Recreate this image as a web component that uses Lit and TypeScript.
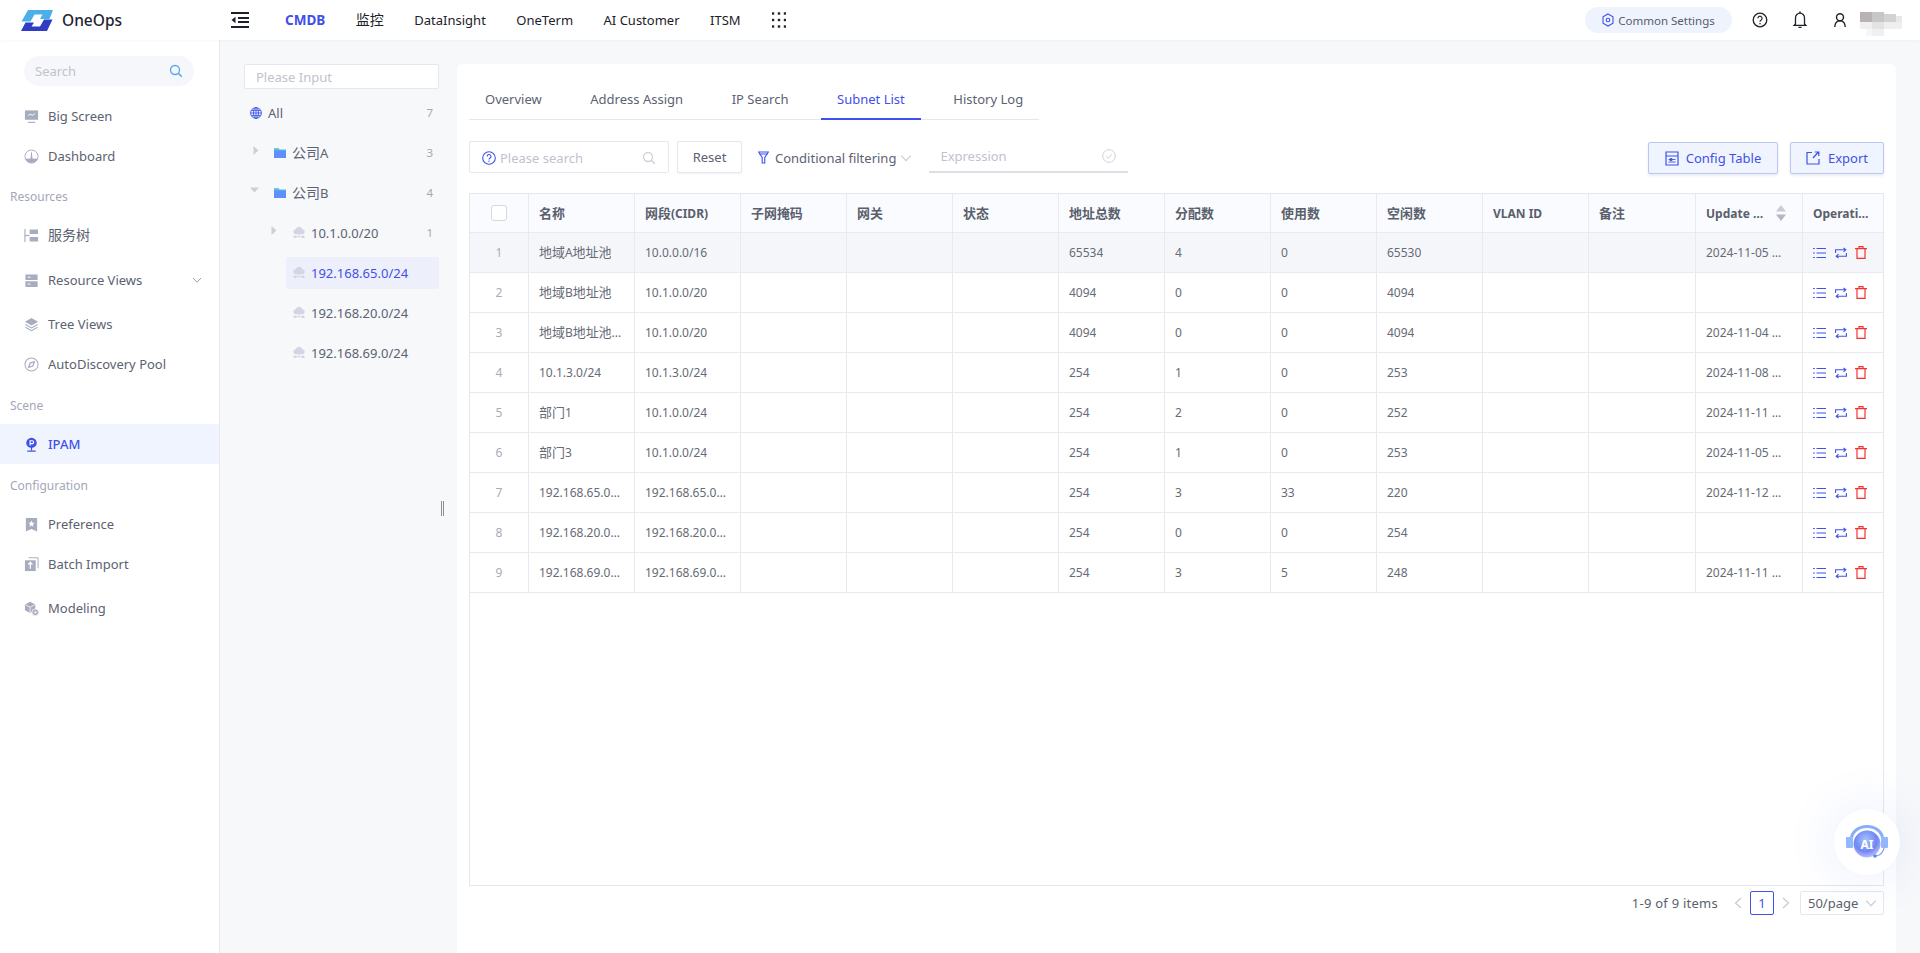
import { html, css, LitElement, svg } from "lit";
import { customElement } from "lit/decorators.js";

const FONT = `"Noto Sans", "Noto Sans CJK SC", sans-serif`;

// sidebar icons, 16 box
const sideIcons: Record<string, unknown> = {
  screen: svg`<path d="M1 1.500h14v10H1z" fill="currentColor"/><path d="M4.500 7l2-1.600 2.400 1.400 2.600-1.800" fill="none" stroke="#fff" stroke-width="1"/><path d="M4 13.600h8v1.200H4z" fill="currentColor"/>`,
  dash: svg`<circle cx="8" cy="8" r="7" fill="none" stroke="currentColor" stroke-width="1"/><path d="M1.500 10.500A7 7 0 0 0 14.500 10.500L9 10 8.400 3.500h-.8L7 10z" fill="currentColor"/>`,
  tree: svg`<path d="M1 1v14" stroke="currentColor" stroke-width="1.200"/><path d="M1 8h5" stroke="currentColor" stroke-width="1.200"/><path d="M6 1.500h9v5H6zM6 9.500h9v5H6z" fill="currentColor"/>`,
  views: svg`<path d="M1.500 1.500h13v6h-13zM1.500 8.800h13v6h-13z" fill="currentColor"/><path d="M4 4.500h3M4 11.800h3" stroke="#fff" stroke-width="1"/>`,
  layers: svg`<path d="M8 1l7 4-7 4-7-4z" fill="currentColor"/><path d="M1.500 8l6.500 3.600L14.500 8M1.500 11l6.500 3.600 6.500-3.600" fill="none" stroke="currentColor" stroke-width="1.100"/>`,
  compass: svg`<circle cx="8" cy="8" r="7" fill="none" stroke="currentColor" stroke-width="1.100"/><path d="M11 5L9.500 9.500 5 11l1.500-4.500z" fill="none" stroke="currentColor" stroke-width="1.300"/>`,
  ipam: svg`<path d="M8 .8a5.600 5.600 0 0 1 5.600 5.600c0 3.100-2.600 5.200-5.600 5.200S2.400 9.500 2.400 6.400A5.600 5.600 0 0 1 8 .8z" fill="currentColor"/><path d="M6.500 9V4h2.200a1.500 1.500 0 0 1 0 3.100H6.500" fill="none" stroke="#fff" stroke-width="1.200"/><path d="M8 11.500v2.500M3.500 15h9" stroke="currentColor" stroke-width="1.300"/>`,
  pref: svg`<path d="M2 1h12v14.500l-6-2.800-6 2.800z" fill="currentColor"/><path d="M8 3.800l1 2.200 2.300.2-1.700 1.600.5 2.300L8 9l-2.100 1.100.5-2.300-1.700-1.600L7 6z" fill="#fff"/>`,
  batch: svg`<path d="M5 .8h10v11" fill="none" stroke="currentColor" stroke-width="1"/><path d="M1 3.500h11.500V15H1z" fill="currentColor"/><path d="M6.800 6v6.500M4.500 8l2.300-2.200L9 8" fill="none" stroke="#fff" stroke-width="1.300"/>`,
  model: svg`<path d="M6.500 .8l5.500 3v6l-5.500 3-5.500-3v-6z" fill="currentColor"/><path d="M1.500 4l5 2.700 5-2.700M6.500 6.700v6" fill="none" stroke="#fff" stroke-width=".8"/><circle cx="12" cy="12" r="3.600" fill="currentColor" stroke="#fff" stroke-width=".8"/><path d="M10.300 12h3.400M12 10.300v3.400" stroke="#fff" stroke-width=".8"/>`,
};

type NavEntry =
  | { label: string; mt?: string }
  | { text: string; icon: string; mt?: string; active?: boolean; caret?: boolean };

const NAV: NavEntry[] = [
  { text: "Big Screen", icon: "screen", mt: "mt10" },
  { text: "Dashboard", icon: "dash" },
  { label: "Resources" },
  { text: "服务树", icon: "tree" },
  { text: "Resource Views", icon: "views", mt: "mt5", caret: true },
  { text: "Tree Views", icon: "layers", mt: "mt4" },
  { text: "AutoDiscovery Pool", icon: "compass" },
  { label: "Scene", mt: "mt1" },
  { text: "IPAM", icon: "ipam", active: true },
  { label: "Configuration", mt: "mt1" },
  { text: "Preference", icon: "pref" },
  { text: "Batch Import", icon: "batch" },
  { text: "Modeling", icon: "model", mt: "mt4" },
];

const TREE = [
  { level: 0, kind: "globe", text: "All", count: "7" },
  { level: 1, kind: "folder", text: "公司A", count: "3", arrow: "right" },
  { level: 1, kind: "folder", text: "公司B", count: "4", arrow: "down" },
  { level: 2, kind: "cloud", text: "10.1.0.0/20", count: "1", arrow: "right" },
  { level: 2, kind: "cloud", text: "192.168.65.0/24", selected: true },
  { level: 2, kind: "cloud", text: "192.168.20.0/24" },
  { level: 2, kind: "cloud", text: "192.168.69.0/24" },
];

const HEAD = ["名称", "网段(CIDR)", "子网掩码", "网关", "状态", "地址总数", "分配数", "使用数", "空闲数", "VLAN ID", "备注"];

const ROWS = [
  ["地域A地址池", "10.0.0.0/16", "65534", "4", "0", "65530", "2024-11-05 10:12:33"],
  ["地域B地址池", "10.1.0.0/20", "4094", "0", "0", "4094", ""],
  ["地域B地址池...", "10.1.0.0/20", "4094", "0", "0", "4094", "2024-11-04 16:40:02"],
  ["10.1.3.0/24", "10.1.3.0/24", "254", "1", "0", "253", "2024-11-08 09:25:47"],
  ["部门1", "10.1.0.0/24", "254", "2", "0", "252", "2024-11-11 14:03:18"],
  ["部门3", "10.1.0.0/24", "254", "1", "0", "253", "2024-11-05 11:37:52"],
  ["192.168.65.0/24", "192.168.65.0/24", "254", "3", "33", "220", "2024-11-12 08:51:26"],
  ["192.168.20.0/24", "192.168.20.0/24", "254", "0", "0", "254", ""],
  ["192.168.69.0/24", "192.168.69.0/24", "254", "3", "5", "248", "2024-11-11 17:19:40"],
];

// the reference's Chinese runs are a touch bigger than its latin text
const zh = (s: string) =>
  s.split(/([\u4e00-\u9fff]+)/).map((p, i) => (i % 2 ? html`<span class="zh">${p}</span>` : p));

@customElement("app-root")
export class AppRoot extends LitElement {
  static styles = css`
    :host {
      display: block;
      width: 100%;
      height: 100vh;
      overflow: hidden;
      position: relative;
      background: #f7f8fa;
      font-family: ${css([FONT] as unknown as TemplateStringsArray)};
      font-size: 13px;
      color: #5b6272;
    }
    svg { display: block; flex: none; }
    .zh { font-size: 1.08em; line-height: 1; }

    .top {
      height: 40px;
      background: #fff;
      display: flex;
      align-items: center;
      box-shadow: 0 1px 3px rgba(60, 70, 110, 0.05);
      position: relative;
    }
    .logo { margin-left: 21px; }
    .brand { margin-left: 9px; width: 169px; font-size: 15.5px; font-weight: 500; color: #1f2433; }
    .fold { margin-right: 36px; }
    .menu { display: flex; align-items: center; gap: 30.5px; color: #1d2129; }
    .menu .on { color: #3f51e8; font-weight: 700; font-size: 13.5px; }
    .apps { margin-left: 1px; }
    .top-right { margin-left: auto; display: flex; align-items: center; height: 100%; }
    .settings {
      width: 147px;
      height: 26px;
      box-sizing: border-box;
      border-radius: 13px;
      background: #eef3fd;
      display: flex;
      align-items: center;
      justify-content: center;
      gap: 4px;
      font-size: 11.5px;
      color: #555c6e;
      margin-right: 20px;
    }
    .tool { width: 16px; margin-right: 24px; color: #1d2129; }
    .tool.last { margin-right: 10px; }
    .mosaic { margin-right: 18px; margin-top: 8px; }

    .body { display: flex; height: 913px; }

    .side {
      width: 220px;
      flex: none;
      box-sizing: border-box;
      background: #fff;
      border-right: 1px solid #e8eaef;
      padding-top: 16px;
    }
    .side-search {
      margin-left: 24px;
      width: 170px;
      height: 30px;
      box-sizing: border-box;
      padding: 0 11px;
      border-radius: 15px;
      background: #f6f7fa;
      display: flex;
      align-items: center;
      justify-content: space-between;
      color: #bfc3cd;
    }
    .item {
      height: 40px;
      display: flex;
      align-items: center;
      padding-left: 24px;
      gap: 9px;
    }
    .item .ico { color: #a8acbf; width: 15px; height: 15px; }
    .item.active { background: #f0f4fe; color: #3f51e8; font-weight: 500; }
    .item.active .ico { color: #3f51e8; }
    .caret { margin-left: auto; margin-right: 17px; color: #8d93a3; }
    .label {
      height: 40px;
      margin-bottom: -1px;
      display: flex;
      align-items: center;
      padding-left: 10px;
      font-size: 12px;
      color: #a3a7b8;
    }
    .mt1 { margin-top: 1px; }
    .mt4 { margin-top: 4px; }
    .mt5 { margin-top: 5px; }
    .mt10 { margin-top: 10px; }

    .tree-panel {
      width: 237px;
      flex: none;
      box-sizing: border-box;
      padding: 24px 18px 0 24px;
      position: relative;
    }
    .tree-input {
      height: 25px;
      box-sizing: border-box;
      border: 1px solid #e4e7ed;
      border-radius: 2px;
      background: #fff;
      display: flex;
      align-items: center;
      padding-left: 11px;
      margin-bottom: 8px;
      color: #bfc3cd;
    }
    .node-row { display: flex; height: 32px; margin-bottom: 8px; }
    .sw {
      flex: none;
      display: flex;
      justify-content: flex-end;
      align-items: center;
      padding: 0 9px 6px 0;
      box-sizing: border-box;
    }
    .sw.l0 { width: 0; padding: 0; }
    .sw.l1 { width: 24px; }
    .sw.l2 { width: 42px; }
    .node {
      flex: 1;
      min-width: 0;
      box-sizing: border-box;
      display: flex;
      align-items: center;
      gap: 6px;
      padding: 0 6px 1px;
      border-radius: 2px;
    }
    .node.l2 { padding-left: 7px; }
    .node.sel { background: #edf0fb; color: #3f51e8; }
    .count { margin-left: auto; font-size: 11.5px; color: #a3a7b8; }
    .grip {
      position: absolute;
      left: 221px;
      top: 461px;
      width: 1px;
      height: 15px;
      border-left: 1px solid #8b8f9a;
      border-right: 1px solid #8b8f9a;
    }

    .card {
      width: 1439px;
      flex: none;
      box-sizing: border-box;
      margin-top: 24px;
      padding: 15px 12px 0;
      background: #fff;
      border-radius: 6px 6px 0 0;
      display: flex;
      flex-direction: column;
    }
    .tabs {
      width: 570px;
      height: 41px;
      box-sizing: border-box;
      border-bottom: 1px solid #e4e7ed;
      display: flex;
      gap: 16.6px;
      white-space: nowrap;
    }
    .tab {
      flex: none;
      padding: 0 16px 2px;
      height: 41px;
      box-sizing: border-box;
      display: flex;
      align-items: center;
    }
    .tab.on { color: #3f51e8; border-bottom: 2px solid #3f51e8; padding-bottom: 0; }

    .bar { display: flex; height: 33px; margin-top: 21px; align-items: flex-start; }
    .search {
      width: 200px;
      height: 32px;
      box-sizing: border-box;
      border: 1px solid #e4e7ed;
      border-radius: 2px;
      display: flex;
      align-items: center;
      padding: 1px 12px 0;
      gap: 4px;
      color: #bfc3cd;
    }
    .search .mag { margin-left: auto; }
    .reset {
      margin-left: 8px;
      width: 65px;
      height: 32px;
      box-sizing: border-box;
      border: 1px solid #e4e7ed;
      border-radius: 2px;
      display: flex;
      align-items: center;
      justify-content: center;
      box-shadow: 0 1px 2px rgba(60, 70, 110, 0.06);
    }
    .filter { margin-left: 16px; height: 32px; padding-top: 1px; box-sizing: border-box; display: flex; align-items: center; gap: 6px; }
    .filter svg:last-child { margin-left: -2px; }
    .expr {
      margin-left: 17px;
      width: 199px;
      height: 32px;
      box-sizing: border-box;
      border-bottom: 2px solid #dcdee3;
      display: flex;
      align-items: center;
      justify-content: space-between;
      padding: 0 12px 0 11px;
      color: #bfc3cd;
    }
    .btn {
      height: 32px;
      margin-top: 1px;
      box-sizing: border-box;
      border: 1px solid #b9c6f6;
      border-radius: 2px;
      background: #f0f4fe;
      color: #3f51e8;
      display: flex;
      align-items: center;
      justify-content: center;
      gap: 7px;
      box-shadow: 0 2px 3px rgba(60, 70, 110, 0.1);
    }
    .btn.config { width: 130px; margin-left: auto; }
    .btn.export { width: 94px; margin-left: 12px; gap: 8px; }

    .table {
      margin-top: 19px;
      height: 693px;
      box-sizing: border-box;
      border: 1px solid #e4e7ed;
      font-size: 12px;
      color: #666b76;
    }
    .tr {
      display: grid;
      grid-template-columns: 59px 106px repeat(9, 106px) 107px 107px 1fr;
      height: 40px;
      box-sizing: border-box;
      border-bottom: 1px solid #e8eaef;
    }
    .tr.head { height: 39px; background: #f9fbff; font-weight: 700; color: #5a5f6b; }
    .tr.hover { background: #f5f6fa; }
    .td {
      min-width: 0;
      border-right: 1px solid #e8eaef;
      box-sizing: border-box;
      padding: 0 14px 0 10px;
      display: flex;
      align-items: center;
    }
    .td:last-child { border-right: 0; padding-right: 10px; }
    .td > span { overflow: hidden; white-space: nowrap; text-overflow: ellipsis; min-width: 0; }
    .td > span.full { overflow: visible; text-overflow: clip; }
    .td.idx { justify-content: center; padding: 0; color: #a8acb6; }
    .box {
      width: 16px;
      height: 16px;
      box-sizing: border-box;
      border: 1px solid #d5d8e0;
      border-radius: 3px;
      background: #fff;
    }
    .td > span.short { max-width: 60px; }
    .sort { margin-left: auto; margin-right: 2px; }
    .ops { display: flex; gap: 8.5px; align-items: center; }

    .pager {
      margin-top: 5px;
      height: 24px;
      display: flex;
      align-items: center;
      justify-content: flex-end;
      color: #5a5f6b;
    }
    .pg-count { margin-right: 16px; letter-spacing: 0.25px; }
    .pg-num {
      width: 24px;
      height: 24px;
      margin: 0 8px;
      box-sizing: border-box;
      border: 1px solid #3f51e8;
      border-radius: 2px;
      color: #3f51e8;
      display: flex;
      align-items: center;
      justify-content: center;
    }
    .pg-size {
      margin-left: 10px;
      width: 84px;
      height: 24px;
      box-sizing: border-box;
      border: 1px solid #e4e7ed;
      border-radius: 2px;
      display: flex;
      align-items: center;
      justify-content: space-between;
      padding: 0 6px 0 7px;
    }

    .ai {
      position: absolute;
      left: 1834px;
      top: 809px;
      width: 66px;
      height: 66px;
      border-radius: 50%;
      background: #fff;
      box-shadow: 0 0 40px 12px rgba(90, 110, 240, 0.07);
      display: flex;
      align-items: center;
      justify-content: center;
    }
    .ai text { font-family: ${css([FONT] as unknown as TemplateStringsArray)}; font-weight: 700; font-size: 12px; }
  `;

  private chevron(size = 12, color = "#c9ccd4") {
    return html`<svg width=${size} height=${size} viewBox="0 0 10 10"><path d="M1 3l4 4.200L9 3" fill="none" stroke=${color} stroke-width=".9"/></svg>`;
  }

  private magnifier(color: string) {
    return html`<svg class="mag" width="14" height="14" viewBox="0 0 14 14"><circle cx="6" cy="6" r="4.500" fill="none" stroke=${color} stroke-width="1.300"/><path d="M9.400 9.400l3.400 3.400" stroke=${color} stroke-width="1.500"/></svg>`;
  }

  private renderTop() {
    return html`
      <header class="top">
        <svg class="logo" width="32" height="21" viewBox="0 0 32 21">
          <path d="M7 0H32L28.500 9H19L21.500 4.500H13.500L9.500 11.500H0.500Z" fill="#4bb0e8"/>
          <path d="M31.500 9.500L26 21H0L4.500 12.500H13L10.500 16.500H19L23 9.500Z" fill="#2f3cc4"/>
        </svg>
        <div class="brand">OneOps</div>
        <svg class="fold" width="18" height="16" viewBox="0 0 18 16">
          <path d="M0 1h18M7 6h11M7 10h11M0 15h18" stroke="#1d2129" stroke-width="1.800"/>
          <path d="M4.500 4.800v6.400L.5 8z" fill="#1d2129"/>
        </svg>
        <nav class="menu">
          <span class="on">CMDB</span><span>${zh("监控")}</span><span>DataInsight</span><span>OneTerm</span><span>AI Customer</span><span>ITSM</span>
          <svg class="apps" width="14" height="16" viewBox="0 0 14 16" fill="#1d2129">
            ${[1, 7, 13].flatMap((x) => [1.5, 8, 14.5].map((y) => svg`<rect x=${x - 1.2} y=${y - 1.2} width="2.400" height="2.400"/>`))}
          </svg>
        </nav>
        <div class="top-right">
          <div class="settings">
            <svg width="12" height="14" viewBox="0 0 12 14"><path d="M6 1l5 2.800v6.400L6 13l-5-2.800V3.800z" fill="none" stroke="#3f51e8" stroke-width="1.100"/><circle cx="6" cy="7" r="1.800" fill="none" stroke="#3f51e8" stroke-width="1.100"/></svg>
            Common Settings
          </div>
          <svg class="tool" width="16" height="16" viewBox="0 0 16 16">
            <circle cx="8" cy="8" r="6.800" fill="none" stroke="currentColor" stroke-width="1.300"/>
            <path d="M5.900 6.300a2.100 2.100 0 1 1 3.300 1.700c-.8.500-1.200.9-1.200 1.800" fill="none" stroke="currentColor" stroke-width="1.200"/>
            <circle cx="8" cy="11.700" r=".8" fill="currentColor"/>
          </svg>
          <svg class="tool" width="16" height="18" viewBox="0 0 16 18">
            <path d="M8 2.200a4.500 4.500 0 0 1 4.500 4.500v6.300l1.300 1.300H2.200l1.300-1.300V6.700A4.500 4.500 0 0 1 8 2.200z" fill="none" stroke="currentColor" stroke-width="1.300"/>
            <path d="M8 .6v1.600M6.500 16.400h3" stroke="currentColor" stroke-width="1.400"/>
          </svg>
          <svg class="tool last" width="16" height="16" viewBox="0 0 16 16">
            <circle cx="8" cy="5.200" r="3.500" fill="none" stroke="currentColor" stroke-width="1.400"/>
            <path d="M2.800 15c0-3.500 2-6.300 5.200-6.300s5.200 2.800 5.200 6.300" fill="none" stroke="currentColor" stroke-width="1.400"/>
          </svg>
          <svg class="mosaic" width="44" height="24" viewBox="0 0 44 24">
            <rect x="2" y="0" width="12" height="10" fill="#b8b1b6"/>
            <rect x="14" y="0" width="12" height="10" fill="#c9c6c9"/>
            <rect x="26" y="2" width="12" height="8" fill="#d2d2d4"/>
            <rect x="38" y="4" width="6" height="6" fill="#e8e8e8"/>
            <rect x="2" y="10" width="12" height="7" fill="#f1eff0"/>
            <rect x="14" y="10" width="12" height="7" fill="#e4e3e4"/>
            <rect x="26" y="10" width="18" height="7" fill="#efefef"/>
            <rect x="8" y="17" width="12" height="7" fill="#f7f6f7"/>
            <rect x="14" y="17" width="12" height="7" fill="#f0f0f0"/>
          </svg>
        </div>
      </header>
    `;
  }

  private renderSide() {
    return html`
      <aside class="side">
        <div class="side-search">Search ${this.magnifier("#5aa6f5")}</div>
        ${NAV.map((n) =>
          "label" in n
            ? html`<div class="label ${n.mt ?? ""}">${n.label}</div>`
            : html`<div class="item ${n.mt ?? ""} ${n.active ? "active" : ""}">
                <svg class="ico" viewBox="0 0 16 16">${sideIcons[n.icon]}</svg>
                <span>${zh(n.text)}</span>
                ${n.caret ? html`<span class="caret">${this.chevron(10, "#8d93a3")}</span>` : ""}
              </div>`
        )}
      </aside>
    `;
  }

  private nodeIcon(kind: string) {
    if (kind === "globe")
      return html`<svg width="12" height="12" viewBox="0 0 12 12" fill="none" stroke="#3f51e8" stroke-width=".9"><circle cx="6" cy="6" r="5.400"/><ellipse cx="6" cy="6" rx="2.500" ry="5.400"/><path d="M6 .6v10.800M.6 6h10.800M1.300 3.400h9.400M1.300 8.600h9.400"/></svg>`;
    if (kind === "folder")
      return html`<svg width="12" height="12" viewBox="0 0 12 12"><path d="M0 1.500h4.500l1 1.200H12V11H0z" fill="#5f8ffa"/><path d="M0 1.500h4.500l1 1.200H12v.8H0z" fill="#48c7d8"/></svg>`;
    return html`<svg width="12" height="13" viewBox="0 0 12 13" fill="#d3d6e2"><path d="M3 8.300a2.500 2.500 0 0 1-.3-5A3.400 3.400 0 0 1 9.300 3.300a2.500 2.500 0 0 1-.3 5z"/><path d="M5.500 8.300h1v2h-1z"/><path d="M0 10.300h12v.9H0z"/><rect x="1" y="9.600" width="2.400" height="2.400"/><rect x="8.600" y="9.600" width="2.400" height="2.400"/></svg>`;
  }

  private renderTree() {
    return html`
      <section class="tree-panel">
        <div class="tree-input">Please Input</div>
        ${TREE.map(
          (t) => html`<div class="node-row">
            <div class="sw l${t.level}">
              ${t.arrow === "right"
                ? html`<svg width="6" height="9" viewBox="0 0 6 9"><path d="M0.500 0l5 4.500-5 4.500z" fill="#cdd0da"/></svg>`
                : t.arrow === "down"
                ? html`<svg width="9" height="6" viewBox="0 0 9 6"><path d="M0 .5h9L4.500 5.500z" fill="#cdd0da"/></svg>`
                : ""}
            </div>
            <div class="node l${t.level} ${t.selected ? "sel" : ""}">
              ${this.nodeIcon(t.kind)}
              <span>${zh(t.text)}</span>
              ${t.count ? html`<span class="count">${t.count}</span>` : ""}
            </div>
          </div>`
        )}
        <div class="grip"></div>
      </section>
    `;
  }

  private renderBar() {
    return html`
      <div class="bar">
        <div class="search">
          <svg width="14" height="14" viewBox="0 0 14 14"><circle cx="7" cy="7" r="6.300" fill="none" stroke="#3f51e8" stroke-width="1.100"/><path d="M5.200 5.500a1.900 1.900 0 1 1 2.900 1.500c-.7.500-1.100.8-1.100 1.600" fill="none" stroke="#3f51e8" stroke-width="1.100"/><circle cx="7" cy="10.300" r=".7" fill="#3f51e8"/></svg>
          Please search ${this.magnifier("#cfd2da")}
        </div>
        <div class="reset">Reset</div>
        <div class="filter">
          <svg width="11" height="13" viewBox="0 0 11 13"><path d="M.6 1h9.800L6.800 6.500V12H4.200V6.500z" fill="none" stroke="#3f51e8" stroke-width="1.100"/><path d="M1.500 3h8" stroke="#3f51e8" stroke-width="1"/></svg>
          Conditional filtering ${this.chevron()}
        </div>
        <div class="expr">
          Expression
          <svg width="14" height="14" viewBox="0 0 14 14" fill="none" stroke="#cfd2da" stroke-width="1"><circle cx="7" cy="7" r="6.300"/><path d="M4.200 7.200l2.100 2.100 3.600-4"/></svg>
        </div>
        <div class="btn config">
          <svg width="14" height="15" viewBox="0 0 14 15" fill="none" stroke="#3f51e8" stroke-width="1.200"><path d="M1 1h12v13H1zM1 5h12"/><path d="M3.500 8.500h7M3.500 11h7" stroke-width=".9"/><circle cx="6" cy="8.500" r="1" fill="#3f51e8"/></svg>
          Config Table
        </div>
        <div class="btn export">
          <svg width="14" height="14" viewBox="0 0 14 14" fill="none" stroke="#3f51e8" stroke-width="1.200"><path d="M6 1.500H1v11.500h12V8"/><path d="M7 7l5.500-6M8.800 1h4v4"/></svg>
          Export
        </div>
      </div>
    `;
  }

  private renderOps() {
    return html`<div class="ops">
      <svg width="13" height="12" viewBox="0 0 13 12" stroke="#3f51e8" stroke-width="1.100"><path d="M3.500 1.500H13M3.500 6H13M3.500 10.500H13M0 1.500h1.800M0 6h1.800M0 10.500h1.800"/></svg>
      <svg width="12" height="12" viewBox="0 0 12 12" fill="none" stroke="#3f51e8" stroke-width="1.100"><path d="M.6 6V2.800h10M8.500.8l2.300 2-2.300 2M11.400 6v3.200H1.400M3.500 7.200l-2.300 2 2.300 2"/></svg>
      <svg width="12" height="13" viewBox="0 0 12 13" fill="none" stroke="#f5322d" stroke-width="1.200"><path d="M0 2.600h12M2 2.600v9.800h8V2.600M4 2.600V.7h4v1.900"/></svg>
    </div>`;
  }

  private renderTable() {
    return html`
      <div class="table">
        <div class="tr head">
          <div class="td idx"><div class="box"></div></div>
          ${HEAD.map((h) => html`<div class="td"><span>${zh(h)}</span></div>`)}
          <div class="td">
            <span class="short">Update Time</span>
            <svg class="sort" width="10" height="16" viewBox="0 0 10 16"><path d="M5 0l5 6.500H0z" fill="#c9ccd4"/><path d="M5 16L0 9.500h10z" fill="#b3b7c2"/></svg>
          </div>
          <div class="td"><span>Operation</span></div>
        </div>
        ${ROWS.map(
          (r, i) => html`<div class="tr ${i === 0 ? "hover" : ""}">
            <div class="td idx">${i + 1}</div>
            <div class="td"><span class=${r[0].endsWith("...") ? "full" : ""}>${zh(r[0])}</span></div>
            <div class="td"><span>${r[1]}</span></div>
            <div class="td"></div>
            <div class="td"></div>
            <div class="td"></div>
            <div class="td"><span>${r[2]}</span></div>
            <div class="td"><span>${r[3]}</span></div>
            <div class="td"><span>${r[4]}</span></div>
            <div class="td"><span>${r[5]}</span></div>
            <div class="td"></div>
            <div class="td"></div>
            <div class="td"><span>${r[6]}</span></div>
            <div class="td">${this.renderOps()}</div>
          </div>`
        )}
      </div>
    `;
  }

  override render() {
    return html`
      ${this.renderTop()}
      <div class="body">
        ${this.renderSide()}
        ${this.renderTree()}
        <main class="card">
          <div class="tabs">
            <div class="tab">Overview</div>
            <div class="tab">Address Assign</div>
            <div class="tab">IP Search</div>
            <div class="tab on">Subnet List</div>
            <div class="tab">History Log</div>
          </div>
          ${this.renderBar()}
          ${this.renderTable()}
          <div class="pager">
            <span class="pg-count">1-9 of 9 items</span>
            <svg width="8" height="12" viewBox="0 0 8 12"><path d="M7 1L1.500 6 7 11" fill="none" stroke="#c4c7cf" stroke-width="1.100"/></svg>
            <span class="pg-num">1</span>
            <svg width="8" height="12" viewBox="0 0 8 12"><path d="M1 1l5.500 5L1 11" fill="none" stroke="#c4c7cf" stroke-width="1.100"/></svg>
            <div class="pg-size">50/page ${this.chevron()}</div>
          </div>
        </main>
      </div>
      <div class="ai">
        <svg width="44" height="36" viewBox="0 0 44 36">
          <defs>
            <radialGradient id="ball" cx="45%" cy="35%" r="70%">
              <stop offset="0" stop-color="#a9c4fb"/>
              <stop offset=".6" stop-color="#6e86f5"/>
              <stop offset="1" stop-color="#c9c8fb"/>
            </radialGradient>
          </defs>
          <path d="M5 15A17 14 0 0 1 39 15H36A14 11 0 0 0 8 15Z" fill="#86aefa"/>
          <rect x="1" y="13" width="7" height="11" rx="1" fill="#93b7fb"/>
          <rect x="36" y="13" width="7" height="11" rx="1" fill="#93b7fb"/>
          <circle cx="22" cy="20" r="13.500" fill="url(#ball)"/>
          <path d="M39 24c-1 5-4 7.500-8 8" fill="none" stroke="#6e92f6" stroke-width="1.200"/>
          <circle cx="30" cy="32" r="1.800" fill="#5f86f5"/>
          <text x="22" y="24.500" text-anchor="middle" fill="#fff">AI</text>
        </svg>
      </div>
    `;
  }
}
